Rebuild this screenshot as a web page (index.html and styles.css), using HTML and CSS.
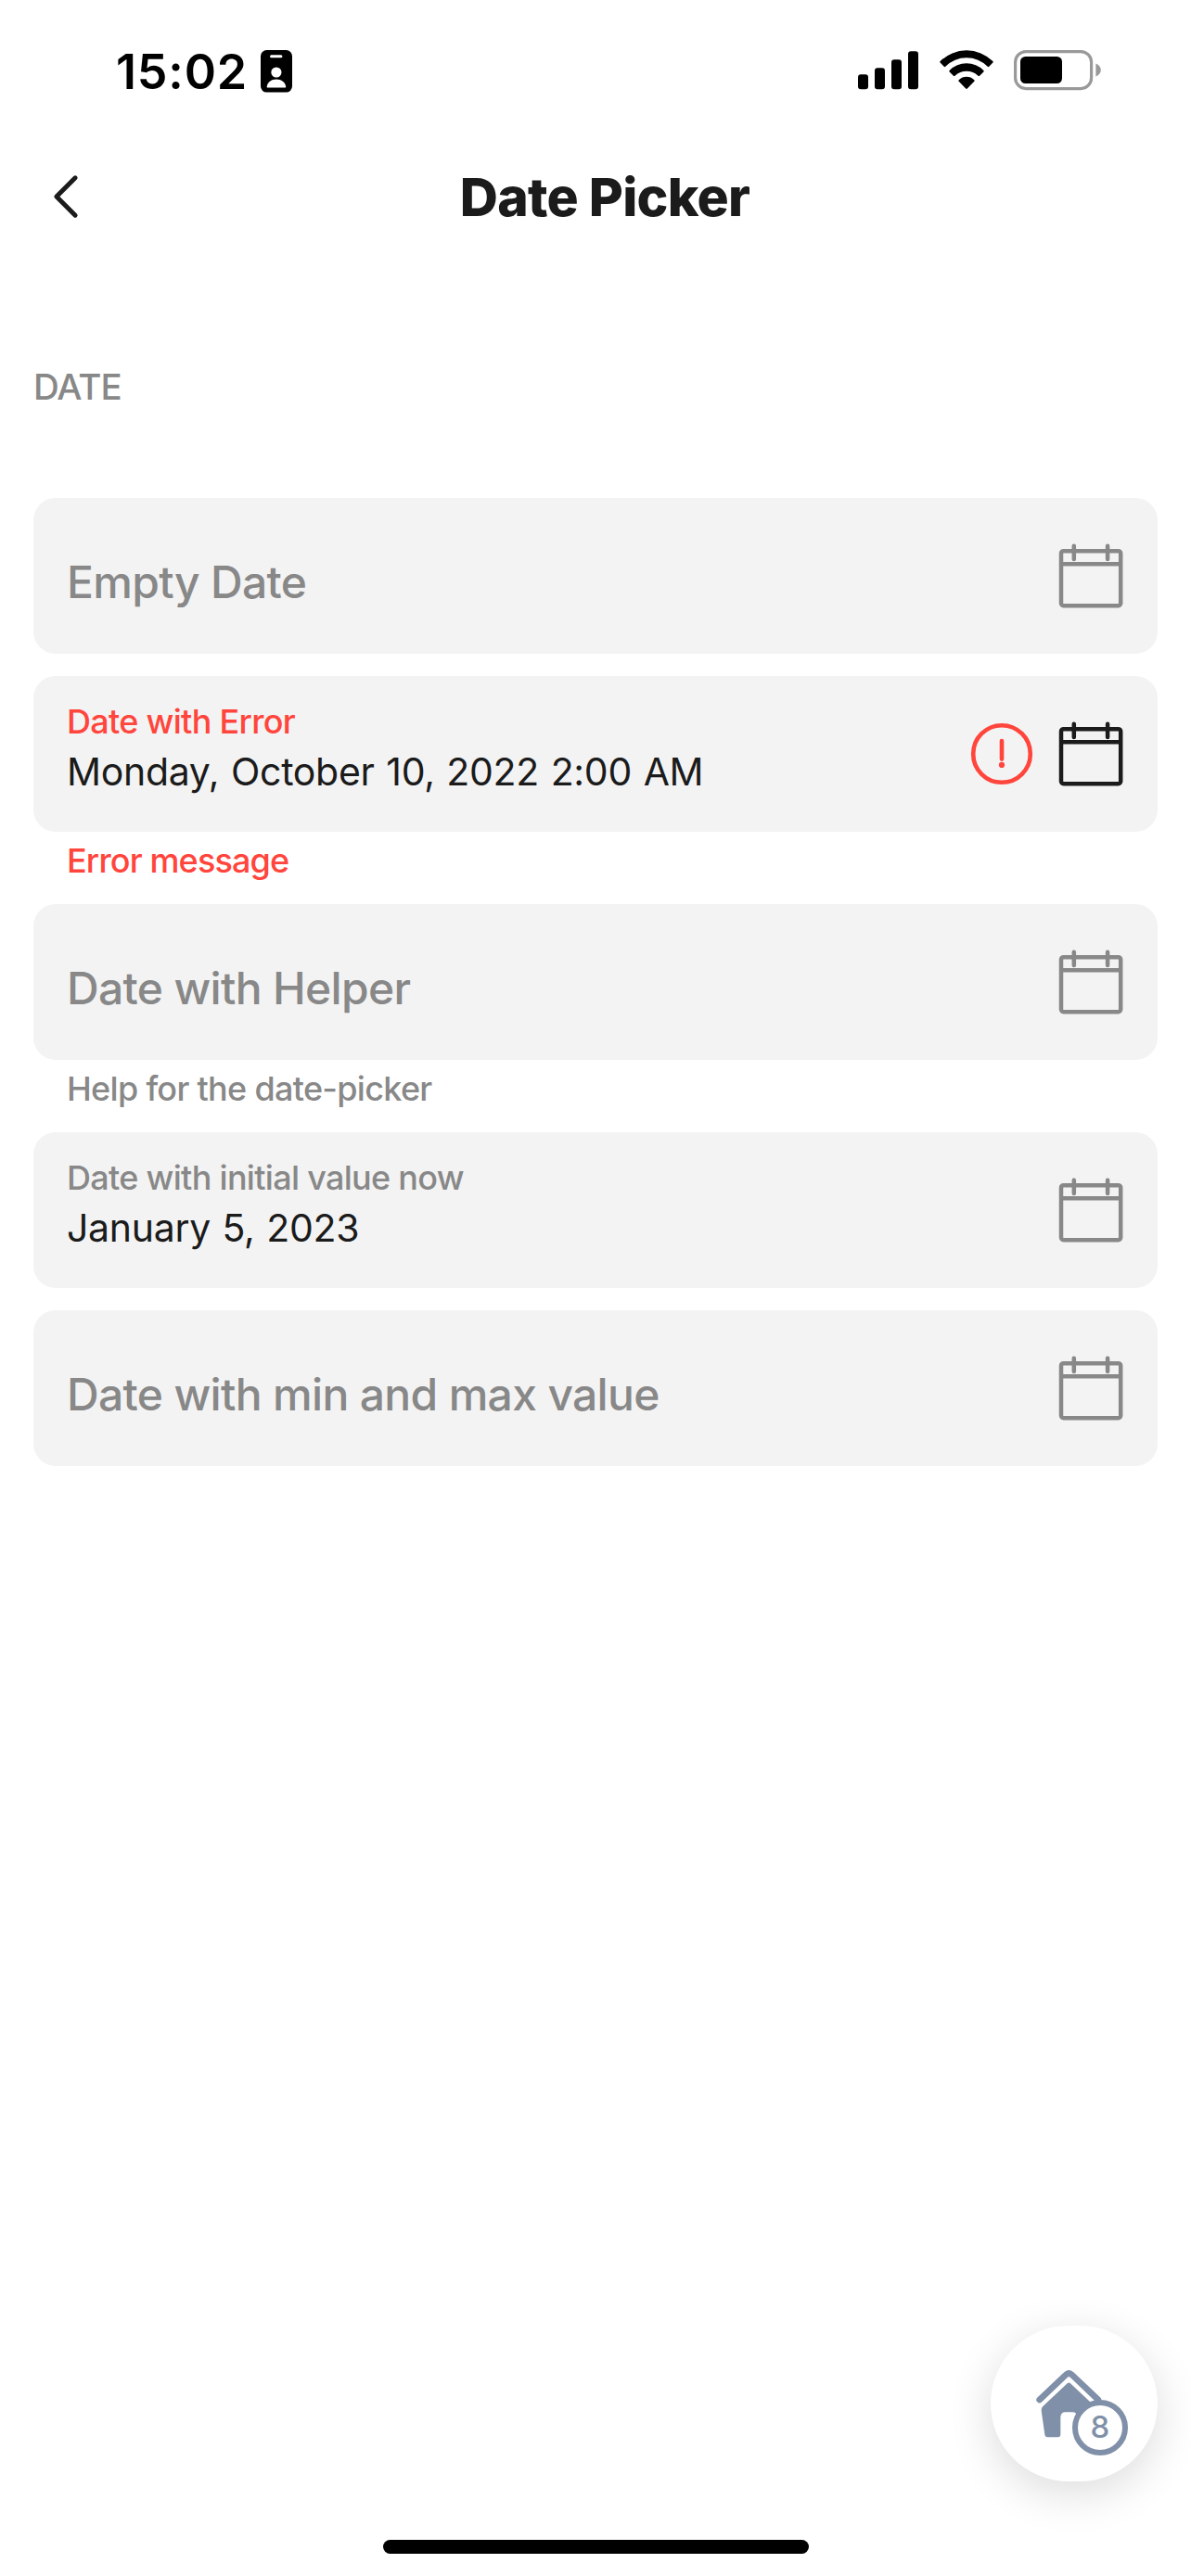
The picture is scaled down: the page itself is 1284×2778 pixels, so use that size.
FILE: index.html
```html
<!DOCTYPE html>
<html lang="en">
<head>
<meta charset="utf-8">
<title>Date Picker</title>
<link rel="stylesheet" href="styles.css">
</head>
<body>
<svg class="sprite" aria-hidden="true">
  <symbol id="calendar" viewBox="0 0 72 72">
    <g fill="none" stroke="currentColor" stroke-width="4.5" stroke-linecap="round">
      <rect x="4" y="9.2" width="64.2" height="59" rx="2.6"/>
      <path d="M4 23.2H68.2" stroke-linecap="butt"/>
      <path d="M17.8 3.8V18M54.1 3.8V18"/>
    </g>
  </symbol>
</svg>
<div class="screen">
  <header class="status">
    <div class="status-left">
      <span class="time">15:02</span>
      <svg class="id-badge" width="34" height="46" viewBox="0 0 34 46">
        <rect width="34" height="45.6" rx="6.5"/>
        <rect x="10" y="5.2" width="13.4" height="3" rx="1.5" fill="#fff"/>
        <circle cx="16.9" cy="24" r="5.6" fill="#fff"/>
        <path d="M6.7 39.4C7.3 34.5 11.5 31.4 16.9 31.4S26.5 34.5 27.2 39.4Q27.2 40.6 26 40.6H8Q6.7 40.6 6.7 39.4Z" fill="#fff"/>
      </svg>
    </div>
    <div class="status-right">
      <svg width="65" height="42" viewBox="0 0 65 42">
        <rect x="0" y="25.2" width="11" height="16" rx="3"/>
        <rect x="18" y="18.2" width="11" height="23" rx="3"/>
        <rect x="36" y="9.2" width="11" height="32" rx="3"/>
        <rect x="54" y="0.2" width="11" height="41" rx="3"/>
      </svg>
      <svg class="wifi" width="58" height="42" viewBox="1012.5 54 58 42">
        <path d="M1013.1 66.1A40.2 40.2 0 0 1 1069.9 66.1Q1070.6 66.9 1069.9 67.6L1065.8 71.8Q1065 72.5 1064.2 71.8A32 32 0 0 0 1018.8 71.8Q1018 72.5 1017.2 71.8L1013.1 67.6Q1012.4 66.9 1013.1 66.1Z"/>
        <path d="M1023.1 76A26 26 0 0 1 1059.9 76Q1060.6 76.9 1059.9 77.6L1055.6 81.8Q1054.8 82.5 1054 81.8A18.2 18.2 0 0 0 1029 81.8Q1028.2 82.5 1027.4 81.8L1023.1 77.6Q1022.4 76.9 1023.1 76Z"/>
        <path d="M1033.2 86.2A12 12 0 0 1 1049.8 86.2Q1050.6 87 1049.8 87.8L1042.3 95.6Q1041.5 96.3 1040.7 95.6L1033.2 87.8Q1032.4 87 1033.2 86.2Z"/>
      </svg>
      <svg width="94" height="44" viewBox="0 0 94 44">
        <rect x="1.6" y="1.6" width="82" height="40" rx="11.5" fill="none" stroke="#999" stroke-width="3.2"/>
        <rect x="7" y="7" width="45" height="29" rx="5.5"/>
        <path d="M88.4 14.6C91.8 16 93.8 18.6 93.8 21.6S91.8 27.2 88.4 28.6Z" fill="#999"/>
      </svg>
    </div>
  </header>

  <nav class="navbar">
    <svg class="back" width="40" height="60" viewBox="0 0 40 60">
      <path d="M33.1 9.8L12.9 30L33.1 50.2" fill="none" stroke="currentColor" stroke-width="5" stroke-linecap="round" stroke-linejoin="round"/>
    </svg>
    <h1 class="title">Date Picker</h1>
  </nav>

  <main class="content">
    <h2 class="section">DATE</h2>

    <div class="group">
      <div class="field empty">
        <div class="text"><span class="placeholder">Empty Date</span></div>
        <svg class="icon"><use href="#calendar"/></svg>
      </div>
    </div>

    <div class="group error">
      <div class="field">
        <div class="text">
          <span class="label">Date with Error</span>
          <span class="value">Monday, October 10, 2022 2:00 AM</span>
        </div>
        <svg class="icon alert" viewBox="0 0 72 72">
          <circle cx="36" cy="36" r="30.8" fill="none" stroke="currentColor" stroke-width="4.6"/>
          <path d="M36 22V41.6" stroke="currentColor" stroke-width="4.6" stroke-linecap="round"/>
          <circle cx="36" cy="47.9" r="3.1" fill="currentColor"/>
        </svg>
        <svg class="icon dark"><use href="#calendar"/></svg>
      </div>
      <p class="hint">Error message</p>
    </div>

    <div class="group">
      <div class="field empty">
        <div class="text"><span class="placeholder">Date with Helper</span></div>
        <svg class="icon"><use href="#calendar"/></svg>
      </div>
      <p class="hint">Help for the date-picker</p>
    </div>

    <div class="group">
      <div class="field">
        <div class="text">
          <span class="label">Date with initial value now</span>
          <span class="value">January 5, 2023</span>
        </div>
        <svg class="icon"><use href="#calendar"/></svg>
      </div>
    </div>

    <div class="group">
      <div class="field empty">
        <div class="text"><span class="placeholder">Date with min and max value</span></div>
        <svg class="icon"><use href="#calendar"/></svg>
      </div>
    </div>
  </main>

  <button class="fab" type="button">
    <svg class="house" width="72" height="73" viewBox="0 0 216 219">
      <path d="M14 96L98 16Q109 5 120 16L204 96" fill="none" stroke="currentColor" stroke-width="20" stroke-linecap="round" stroke-linejoin="round"/>
      <path d="M104 43Q109 38 114 43L193 117Q199 123 198 131L190 210Q189 217 180 217H145Q136 217 136 208V153Q136 136 120 136H98Q82 136 82 153V208Q82 217 73 217H40Q32 217 31 208L20 131Q19 123 25 117Z" fill="currentColor"/>
    </svg>
    <span class="count">8</span>
  </button>
  <div class="home-bar"></div>
</div>
</body>
</html>
```
FILE: styles.css
```css
* {
  box-sizing: border-box;
}

body {
  margin: 0;
  background: #fff;
  color: #1b1b1b;
  font-family: Inter, "Liberation Sans", sans-serif;
}

svg {
  display: block;
  flex: none;
}

.sprite {
  display: none;
}

.screen {
  position: relative;
  display: flex;
  flex-direction: column;
  width: 1284px;
  height: 2778px;
  overflow: hidden;
}

.status {
  display: flex;
  justify-content: space-between;
  height: 142px;
  padding: 54px 97px 0 125px;
  color: #000;
}

.status-left,
.status-right {
  display: flex;
  align-items: flex-start;
}

.status-left {
  gap: 15px;
}

.time {
  width: 141px;
  font-size: 52px;
  font-weight: 600;
  line-height: 48px;
  letter-spacing: 0.8px;
}

.status-right {
  gap: 22.5px;
}

.status-right svg:first-child {
  margin-top: 1px;
}

.navbar {
  display: flex;
  align-items: center;
  height: 140px;
  padding: 0 28px 0 48px;
}

.title {
  flex: 1;
  margin: 0;
  padding: 2px 40px 0 0;
  text-align: center;
  font-size: 57px;
  font-weight: 800;
  line-height: 60px;
  letter-spacing: -0.75px;
}

.content {
  display: flex;
  flex: 1;
  flex-direction: column;
  gap: 24px;
  padding: 111px 36px 0;
}

.section {
  margin: 0 0 72px;
  color: #888;
  font-size: 38.5px;
  font-weight: 500;
  line-height: 48px;
  letter-spacing: -1px;
}

.field {
  display: flex;
  align-items: center;
  height: 168px;
  padding: 0 36px;
  border-radius: 24px;
  background: #f3f3f3;
  color: #888;
}

.text {
  display: flex;
  flex: 1;
  flex-direction: column;
  align-self: stretch;
  padding-top: 24px;
  white-space: nowrap;
}

.empty .text {
  justify-content: center;
  padding-top: 13px;
}

.placeholder {
  font-size: 48px;
  font-weight: 500;
  line-height: 58px;
  letter-spacing: -0.67px;
}

.label,
.hint {
  font-size: 36px;
  font-weight: 500;
  letter-spacing: -0.7px;
}

.label {
  line-height: 50px;
}

.value {
  color: #1b1b1b;
  font-size: 41px;
  font-weight: 400;
  line-height: 58px;
  letter-spacing: -0.3px;
  word-spacing: 1.4px;
}

.hint {
  margin: 0;
  padding: 8px 36px 0;
  color: #888;
  line-height: 46px;
}

.icon {
  width: 72px;
  height: 72px;
}

.alert {
  margin-right: 24px;
  color: #ff453c;
}

.dark {
  color: #1b1b1b;
}

.error .label,
.error .hint {
  color: #ff453c;
}

.error .hint {
  letter-spacing: -0.85px;
}

.fab {
  position: absolute;
  right: 36px;
  bottom: 102px;
  width: 180px;
  height: 168px;
  padding: 48px 0 0 48px;
  border: 0;
  border-radius: 84px;
  background: #fff;
  box-shadow: 0 12px 48px rgba(0, 0, 0, 0.14);
  color: #8090a8;
  font-family: inherit;
  display: flex;
  align-items: flex-start;
}

.count {
  position: absolute;
  top: 80px;
  left: 88px;
  width: 60px;
  height: 60px;
  border: 6px solid currentColor;
  border-radius: 50%;
  background: #fff;
  font-size: 33px;
  font-weight: 500;
  line-height: 47px;
  text-align: center;
}

.home-bar {
  align-self: center;
  width: 459px;
  height: 15px;
  margin-bottom: 24px;
  border-radius: 8px;
  background: #000;
}
```
